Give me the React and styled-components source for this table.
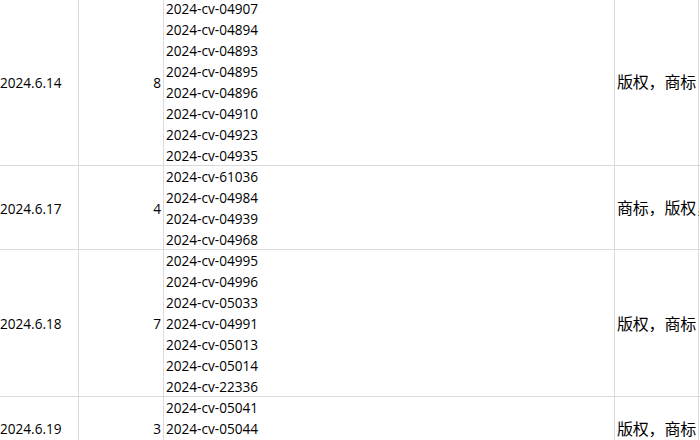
import React from "react";
import styled, { createGlobalStyle } from "styled-components";

const rows = [
  {
    date: "2024.6.14",
    cases: [
      "2024-cv-04907",
      "2024-cv-04894",
      "2024-cv-04893",
      "2024-cv-04895",
      "2024-cv-04896",
      "2024-cv-04910",
      "2024-cv-04923",
      "2024-cv-04935",
    ],
    type: "版权，商标",
  },
  {
    date: "2024.6.17",
    cases: ["2024-cv-61036", "2024-cv-04984", "2024-cv-04939", "2024-cv-04968"],
    type: "商标，版权，",
  },
  {
    date: "2024.6.18",
    cases: [
      "2024-cv-04995",
      "2024-cv-04996",
      "2024-cv-05033",
      "2024-cv-04991",
      "2024-cv-05013",
      "2024-cv-05014",
      "2024-cv-22336",
    ],
    type: "版权，商标",
  },
  {
    date: "2024.6.19",
    cases: ["2024-cv-05041", "2024-cv-05044", "2024-cv-05046"],
    type: "版权，商标",
  },
];

const Global = createGlobalStyle`
  html, body {
    margin: 0;
    padding: 0;
    background: #ffffff;
    overflow: hidden;
  }
  body {
    width: 700px;
    height: 440px;
  }
`;

const Sheet = styled.div`
  width: 700px;
  height: 440px;
  overflow: hidden;
  background: #fff;
`;

const Grid = styled.div`
  display: grid;
  grid-template-columns: 83px 85px 451px 84px 60px;
  margin-left: -4px;
  margin-top: -2px;
  font-family: "Open Sans", "Liberation Sans", sans-serif;
  font-size: 13.6px;
  color: #000;
`;

const Cell = styled.div`
  display: flex;
  flex-direction: column;
  justify-content: center;
  align-items: ${(p) => (p.$align === "right" ? "flex-end" : "flex-start")};
  padding: ${(p) => (p.$align === "right" ? "0 3px 0 0" : "0 0 0 2px")};
  box-shadow: inset -1px -1px 0 #dadada;
  overflow: hidden;
  white-space: nowrap;
`;

const DateCell = styled(Cell)`
  padding-left: 4px;
`;

const CaseLine = styled.div`
  line-height: 21px;
  height: 21px;
`;

const TypeCell = styled(Cell)`
  font-family: "Noto Sans CJK SC", "Noto Sans", sans-serif;
  font-size: 16px;
  letter-spacing: -0.2px;
  padding-bottom: 2px;
`;

export default function App() {
  return (
    <Sheet>
      <Global />
      <Grid>
        {rows.map((r) => (
          <React.Fragment key={r.date}>
            <DateCell>{r.date}</DateCell>
            <Cell $align="right">{r.cases.length}</Cell>
            <Cell>
              {r.cases.map((c) => (
                <CaseLine key={c}>{c}</CaseLine>
              ))}
            </Cell>
            <TypeCell>{r.type}</TypeCell>
            <Cell />
          </React.Fragment>
        ))}
      </Grid>
    </Sheet>
  );
}
